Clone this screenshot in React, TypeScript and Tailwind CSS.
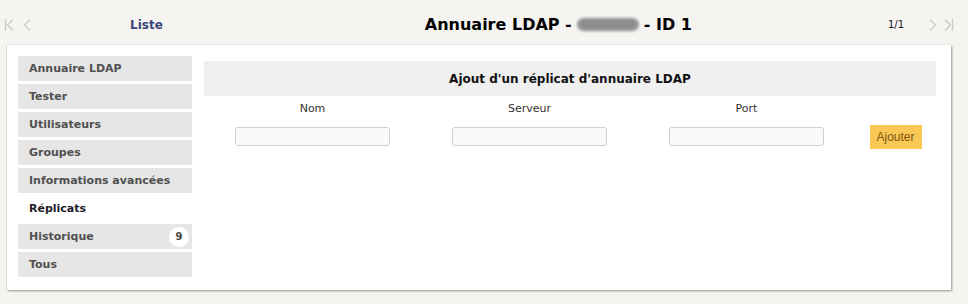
import React from "react";

const menu = [
  { label: "Annuaire LDAP" },
  { label: "Tester" },
  { label: "Utilisateurs" },
  { label: "Groupes" },
  { label: "Informations avancées" },
  { label: "Réplicats", active: true },
  { label: "Historique", badge: "9" },
  { label: "Tous" },
];

function Chevron({ dir, bar }: { dir: "left" | "right"; bar?: boolean }) {
  return (
    <svg width="12" height="14" viewBox="0 0 12 14" fill="none" stroke="#c9c9c9" strokeWidth="1.3">
      {dir === "left" ? (
        <>
          {bar && <line x1="1.5" y1="1" x2="1.5" y2="13" />}
          <polyline points={bar ? "9,1.5 3.5,7 9,12.5" : "8,1.5 2.5,7 8,12.5"} />
        </>
      ) : (
        <>
          <polyline points={bar ? "3,1.5 8.5,7 3,12.5" : "4,1.5 9.5,7 4,12.5"} />
          {bar && <line x1="10.5" y1="1" x2="10.5" y2="13" />}
        </>
      )}
    </svg>
  );
}

export default function App() {
  return (
    <div className="w-[968px] h-[304px] bg-[#f5f4f1] font-['DejaVu_Sans',Verdana,sans-serif] overflow-hidden">
      {/* top bar */}
      <div className="h-[45px] flex items-center pt-[4px]">
        <div className="flex items-center gap-[6px] pl-[4px]">
          <Chevron dir="left" bar />
          <Chevron dir="left" />
        </div>
        <a className="ml-[96px] text-[12px] font-bold text-[#3b4478]">Liste</a>
        <h1 className="ml-[262px] text-[16px] font-bold text-black flex items-center">
          Annuaire LDAP -
          <span className="inline-block w-[62px] h-[13px] mx-[5px] rounded-full bg-[#8e8e8e] blur-[1.5px]" />
          - ID 1
        </h1>
        <span className="ml-auto text-[10px] text-[#111] mr-[22px]">1/1</span>
        <div className="flex items-center gap-[4px] mr-[14px]">
          <Chevron dir="right" />
          <Chevron dir="right" bar />
        </div>
      </div>

      {/* card */}
      <div className="ml-[7px] w-[944px] h-[245px] bg-white shadow-[1px_1px_2px_rgba(0,0,0,0.4),-1px_0_1px_rgba(0,0,0,0.08)] flex pl-[11px] pr-[15px] pt-[11px]">
        <ul className="w-[174px] flex flex-col gap-[3.5px]">
          {menu.map((m) => (
            <li
              key={m.label}
              className={`h-[24.5px] flex items-center justify-between pl-[11px] pr-[3px] pt-[1px] text-[11px] font-bold ${
                m.active ? "bg-white text-[#1d1d2a]" : "bg-[#e6e6e6] text-[#505050]"
              }`}
            >
              <span>{m.label}</span>
              {m.badge && (
                <span className="w-[20px] h-[20px] rounded-full bg-white flex items-center justify-center text-[10px] text-[#444]">
                  {m.badge}
                </span>
              )}
            </li>
          ))}
        </ul>

        <div className="ml-[12px] flex-1 pt-[5px]">
          <div className="h-[35px] bg-[#f0f0f0] flex items-center justify-center text-[12px] font-bold text-[#111]">
            Ajout d'un réplicat d'annuaire LDAP
          </div>
          <div className="grid grid-cols-[217px_217px_217px_1fr] text-[11px] text-[#333] pt-[1px]">
            <div className="h-[25px] flex items-center justify-center">Nom</div>
            <div className="h-[25px] flex items-center justify-center">Serveur</div>
            <div className="h-[25px] flex items-center justify-center">Port</div>
            <div />
            {[0, 1, 2].map((i) => (
              <div key={i} className="h-[28px] flex items-center justify-center">
                <input className="w-[155px] h-[19px] border border-[#cfcfcf] rounded-[3px] bg-[#fafafa]" />
              </div>
            ))}
            <div className="h-[28px] flex items-center justify-center pt-[2px]">
              <button className="w-[52px] h-[24px] bg-[#fbc856] text-[#7d5610] text-[12px] font-['Liberation_Sans',Arial,sans-serif]">
                Ajouter
              </button>
            </div>
          </div>
        </div>
      </div>
    </div>
  );
}
